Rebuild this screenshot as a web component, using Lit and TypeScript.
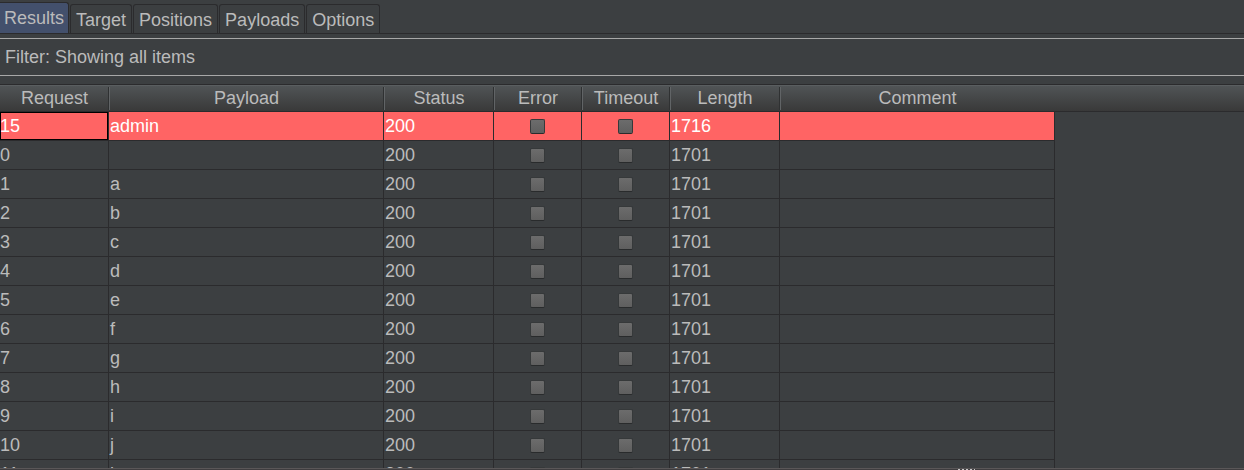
import { LitElement, html, css } from "lit";
import { customElement, property, state } from "lit/decorators.js";
import { classMap } from "lit/directives/class-map.js";

interface AttackResult {
  request: number;
  payload: string;
  status: number;
  length: number;
}

const TABS = ["Results", "Target", "Positions", "Payloads", "Options"];

const COLUMNS = ["Request", "Payload", "Status", "Error", "Timeout", "Length", "Comment"];

const RESULTS: AttackResult[] = [
  { request: 15, payload: "admin", status: 200, length: 1716 },
  { request: 0, payload: "", status: 200, length: 1701 },
  ..."abcdefghijk".split("").map((payload, i) => ({
    request: i + 1,
    payload,
    status: 200,
    length: 1701,
  })),
];

@customElement("result-table")
export class ResultTable extends LitElement {
  @property({ attribute: false }) rows: AttackResult[] = [];
  @state() private selected = 15;

  static styles = css`
    :host {
      display: block;
      border-top: 1px solid #2b2b2d;
      background: linear-gradient(#5a5e60, #5a5e60) 0 0 / 100% 1px no-repeat,
        linear-gradient(#2b2b2d, #2b2b2d) 0 26px / 100% 1px no-repeat,
        linear-gradient(#515557, #393939) 0 0 / 100% 26px no-repeat;
    }
    table {
      width: 1055px;
      table-layout: fixed;
      border-collapse: separate;
      border-spacing: 0;
    }
    .narrow {
      width: 88px;
    }
    .medium {
      width: 110px;
    }
    .first {
      width: 109px;
    }
    .wide {
      width: 275px;
    }
    th {
      height: 27px;
      padding: 0;
      font-weight: 400;
      line-height: 27px;
      text-align: center;
      background: linear-gradient(#2f3132, #2f3132) 100% 2px / 1px 23px no-repeat,
        linear-gradient(#616466, #616466) 0 2px / 1px 23px no-repeat;
    }
    th:first-child {
      background: linear-gradient(#2f3132, #2f3132) 100% 2px / 1px 23px no-repeat;
    }
    th:last-child {
      background: linear-gradient(#616466, #616466) 0 2px / 1px 23px no-repeat;
    }
    td {
      box-sizing: border-box;
      height: 29px;
      padding: 0 1px;
      line-height: 28px;
      border-right: 1px solid #2b2b2d;
      border-bottom: 1px solid #2b2b2d;
      background: #3c3f41;
    }
    td:first-child {
      padding: 0;
    }
    .flag {
      text-align: center;
      line-height: 0;
    }
    .selected td {
      color: #ffffff;
      background: #ff6464;
    }
    .selected td:first-child {
      box-shadow: inset 0 0 0 1px #000000;
    }
    .flag input {
      appearance: none;
      box-sizing: border-box;
      width: 15px;
      height: 15px;
      margin: 0;
      vertical-align: middle;
      border: 1px solid #36393a;
      border-bottom-color: #292b2c;
      border-radius: 2px;
      background: linear-gradient(#6c6c6c, #5f5f5f);
    }
  `;

  render() {
    return html`
      <table>
        <colgroup>
          <col class="first" />
          <col class="wide" />
          <col class="medium" />
          <col class="narrow" />
          <col class="narrow" />
          <col class="medium" />
          <col class="wide" />
        </colgroup>
        <thead>
          <tr>
            ${COLUMNS.map((name) => html`<th scope="col">${name}</th>`)}
          </tr>
        </thead>
        <tbody>
          ${this.rows.map(
            (row) => html`
              <tr
                class=${classMap({ selected: row.request === this.selected })}
                @click=${() => (this.selected = row.request)}
              >
                <td>${row.request}</td>
                <td>${row.payload}</td>
                <td>${row.status}</td>
                <td class="flag"><input type="checkbox" aria-label="Error" /></td>
                <td class="flag"><input type="checkbox" aria-label="Timeout" /></td>
                <td>${row.length}</td>
                <td></td>
              </tr>
            `,
          )}
        </tbody>
      </table>
    `;
  }
}

@customElement("app-root")
export class AppRoot extends LitElement {
  @state() private tab = "Results";

  static styles = css`
    :host {
      display: flex;
      flex-direction: column;
      height: 100vh;
      overflow: hidden;
      color: #bbbbbb;
      background: #3c3f41;
      font: 18px/20px "Liberation Sans", Arial, sans-serif;
    }
    .tabs {
      display: flex;
      align-items: flex-end;
      gap: 1px;
      flex: none;
      padding-top: 2px;
      border-bottom: 1px solid #2b2b2d;
    }
    .tab {
      box-sizing: border-box;
      height: 29px;
      margin: 0;
      padding: 2px 5px 0;
      color: inherit;
      font: inherit;
      background: none;
      border: 1px solid #2b2b2d;
      border-bottom: 0;
      border-radius: 3px 3px 0 0;
    }
    .tab.active {
      height: 31px;
      padding: 0 4px;
      border-left: 0;
      border-radius: 0 3px 0 0;
      background: #43506c;
    }
    .filter {
      flex: none;
      width: 100%;
      margin: 4px 0 8px;
      padding: 8px 5px;
      color: inherit;
      font: inherit;
      text-align: left;
      background: none;
      border: solid #a8a8a8;
      border-width: 1px 0;
    }
    result-table {
      flex: 1;
      min-height: 0;
      overflow: hidden;
    }
    .splitter {
      flex: none;
      display: flex;
      justify-content: center;
      height: 1px;
      padding-left: 688px;
      border-top: 1px solid #5a5758;
      background: #3f3d3f;
    }
    .grip {
      width: 17px;
      background: repeating-linear-gradient(90deg, #c8c8c8 0 2px, #3f3d3f 2px 4px);
    }
  `;

  render() {
    return html`
      <div class="tabs" role="tablist">
        ${TABS.map(
          (name) => html`<button
            type="button"
            role="tab"
            class=${classMap({ tab: true, active: name === this.tab })}
            aria-selected=${name === this.tab ? "true" : "false"}
            @click=${() => (this.tab = name)}
          >${name}</button>`,
        )}
      </div>
      <button type="button" class="filter">Filter: Showing all items</button>
      <result-table .rows=${RESULTS}></result-table>
      <div class="splitter"><span class="grip"></span></div>
    `;
  }
}
